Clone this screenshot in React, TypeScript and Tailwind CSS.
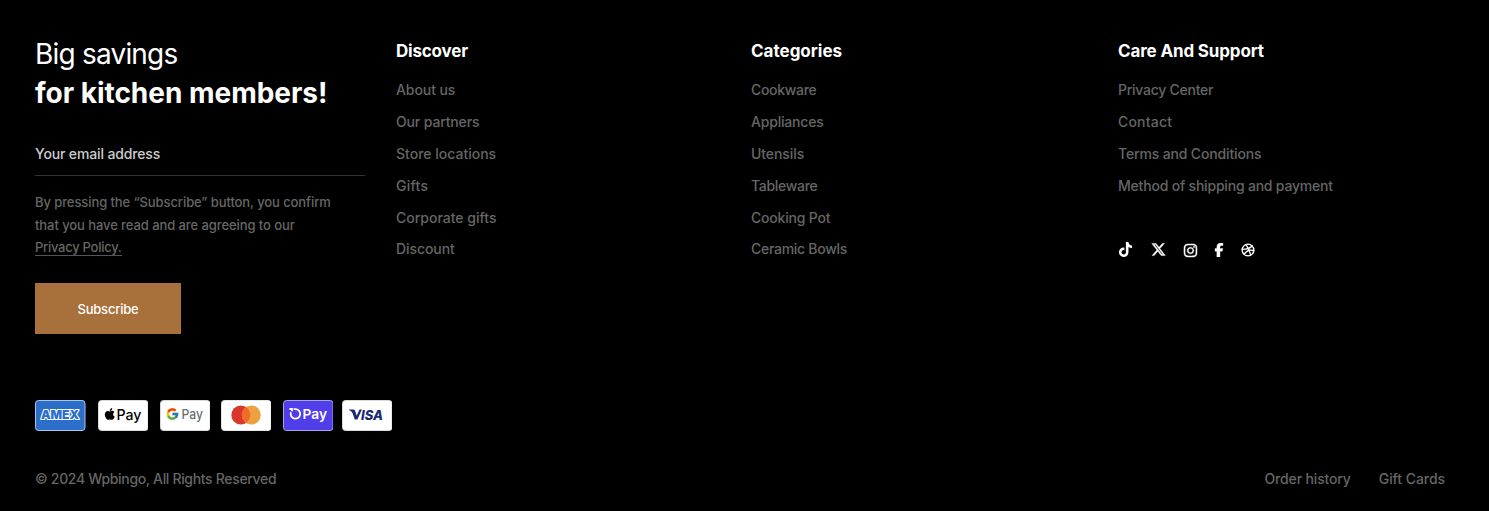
import React from "react";
import { FaTiktok, FaXTwitter, FaInstagram, FaFacebookF } from "react-icons/fa6";
import { FaApple } from "react-icons/fa";
import { FcGoogle } from "react-icons/fc";
import { FiDribbble } from "react-icons/fi";

type Item = { label: string; track: string };

const discover: Item[] = [
  { label: "About us", track: "tracking-[-0.08px]" },
  { label: "Our partners", track: "tracking-[-0.14px]" },
  { label: "Store locations", track: "tracking-[0px]" },
  { label: "Gifts", track: "tracking-[0.25px]" },
  { label: "Corporate gifts", track: "tracking-[0px]" },
  { label: "Discount", track: "tracking-[-0.08px]" },
];

const categories: Item[] = [
  { label: "Cookware", track: "tracking-[-0.32px]" },
  { label: "Appliances", track: "tracking-[-0.2px]" },
  { label: "Utensils", track: "tracking-[-0.08px]" },
  { label: "Tableware", track: "tracking-[-0.3px]" },
  { label: "Cooking Pot", track: "tracking-[-0.2px]" },
  { label: "Ceramic Bowls", track: "tracking-[-0.28px]" },
];

const support: Item[] = [
  { label: "Privacy Center", track: "tracking-[-0.26px]" },
  { label: "Contact", track: "tracking-[0.2px]" },
  { label: "Terms and Conditions", track: "tracking-[-0.15px]" },
  { label: "Method of shipping and payment", track: "tracking-[-0.2px]" },
];

function LinkColumn({ title, titleTrack, items, children }: { title: string; titleTrack: string; items: Item[]; children?: React.ReactNode }) {
  return (
    <div>
      <h3 className={`text-[17px] leading-6 font-bold text-white ${titleTrack}`}>{title}</h3>
      <ul className="mt-[11.45px]">
        {items.map((i) => (
          <li key={i.label} className="h-[31.8px] leading-[32px]">
            <a className={i.track}>{i.label}</a>
          </li>
        ))}
      </ul>
      {children}
    </div>
  );
}

function Card({ fill, border, children }: { fill: string; border: string; children: React.ReactNode }) {
  return (
    <svg width="50.5" height="31" viewBox="0 0 50.5 31" className="shrink-0">
      <rect x="0.5" y="0.5" width="49.5" height="30" rx="3" fill={fill} stroke={border} />
      {children}
    </svg>
  );
}

export default function App() {
  return (
    <footer className="h-[511px] w-[1489px] bg-black px-[35px] pt-[35px] font-['Inter',sans-serif] text-[14px] font-medium text-[#666]">
      <div className="grid h-[365px] grid-cols-[361px_355px_367px_1fr] items-start">
        <div className="w-[330px]">
          <h2 className="text-[28px] leading-[39px] text-white">
            <span className="block font-normal tracking-[-0.8px]">Big savings</span>
            <span className="block font-bold tracking-[-0.02px]">for kitchen members!</span>
          </h2>
          <div className="mt-[20px] h-[43px] border-b border-[#333] text-[14px] leading-[42px] text-[#ccc] tracking-[-0.14px]">Your email address</div>
          <p className="mt-[15px] text-[13px] leading-[22.6px]">
            <span className="block tracking-[-0.09px] whitespace-nowrap">By pressing the “Subscribe” button, you confirm</span>
            <span className="block tracking-[-0.08px] whitespace-nowrap">that you have read and are agreeing to our</span>
            <a className="inline-block h-[20px] border-b border-[#555] tracking-[-0.27px]">Privacy Policy.</a>
          </p>
          <button className="mt-[24px] flex h-[51px] w-[146px] items-center justify-center bg-[#a8713b] pt-0.5 text-[13px] text-white tracking-[-0.2px]">Subscribe</button>
        </div>
        <div className="pt-1">
          <LinkColumn title="Discover" titleTrack="tracking-[-0.2px]" items={discover} />
        </div>
        <div className="pt-1">
          <LinkColumn title="Categories" titleTrack="tracking-[0px]" items={categories} />
        </div>
        <div className="pt-1">
          <LinkColumn title="Care And Support" titleTrack="tracking-[-0.14px]" items={support}>
            <div className="mt-[40px] flex h-4 items-center text-white">
              <FaTiktok size={15} />
              <FaXTwitter size={15} className="ml-[18px]" stroke="currentColor" strokeWidth={14} />
              <FaInstagram size={15} className="mt-px ml-[17px]" stroke="currentColor" strokeWidth={14} />
              <FaFacebookF size={14} className="ml-[14px]" stroke="currentColor" strokeWidth={12} />
              <FiDribbble size={14} strokeWidth={2.4} className="mt-px ml-[15px]" />
            </div>
          </LinkColumn>
        </div>
      </div>

      <div className="flex h-[31px]">
        <Card fill="#2b6fcb" border="#a9c6ec">
          <text x="6" y="19.3" textLength="38" lengthAdjust="spacingAndGlyphs" fontSize="12" fontWeight="900" fill="#2b6fcb" stroke="#fff" strokeWidth="2.2" strokeLinejoin="round" paintOrder="stroke">AMEX</text>
        </Card>
        <span className="w-[12px]" />
        <Card fill="#fff" border="#d9d9d9">
          <FaApple x={5} y={7.2} size={13.5} color="#000" />
          <text x="18.5" y="19.5" textLength="25" lengthAdjust="spacingAndGlyphs" fontSize="14.5" fontWeight="500" fill="#000">Pay</text>
        </Card>
        <span className="w-[11.5px]" />
        <Card fill="#fff" border="#d9d9d9">
          <FcGoogle x={5.5} y={7} size={14} />
          <text x="21.5" y="19.3" textLength="21.5" lengthAdjust="spacingAndGlyphs" fontSize="13.5" fontWeight="500" fill="#6b6f74">Pay</text>
        </Card>
        <span className="w-[10.5px]" />
        <Card fill="#fff" border="#e5e5e5">
          <circle cx="19.8" cy="15" r="9.5" fill="#d9372b" />
          <circle cx="30.3" cy="15" r="9.5" fill="#eba13f" />
          <path d="M25.05 7.1a9.5 9.5 0 0 1 0 15.8a9.5 9.5 0 0 1 0-15.8Z" fill="#f06a2a" />
        </Card>
        <span className="w-[11.5px]" />
        <Card fill="#503ee9" border="#a9a2ec">
          <path d="M6.4 9H9v2.2M10.6 9.1h1.6a4.8 4.8 0 1 1-4.3 3.2" fill="none" stroke="#fff" strokeWidth="1.8" />
          <text x="19.5" y="19.3" textLength="24.5" lengthAdjust="spacingAndGlyphs" fontSize="13.5" fontWeight="600" fill="#fff">Pay</text>
        </Card>
        <span className="w-[8.5px]" />
        <Card fill="#fff" border="#d9d9d9">
          <path d="M7 9.5h4.5q1.2 0 1.6 1.2l1.6 5 2.8-6.2h2.4l-4.5 10.1h-2.6L10.5 13Q9.5 10.8 7 10Z" fill="#1a2878" />
          <text x="19" y="19.6" textLength="22" lengthAdjust="spacingAndGlyphs" fontSize="13.8" fontWeight="800" fontStyle="italic" fill="#1a2878">ISA</text>
        </Card>
      </div>

      <div className="mt-[36px] flex justify-between pr-[9px] leading-6">
        <p className="tracking-[-0.33px]">© 2024 Wpbingo, All Rights Reserved</p>
        <nav className="flex gap-7">
          <a className="tracking-[-0.15px]">Order history</a>
          <a className="tracking-[-0.06px]">Gift Cards</a>
        </nav>
      </div>
    </footer>
  );
}
